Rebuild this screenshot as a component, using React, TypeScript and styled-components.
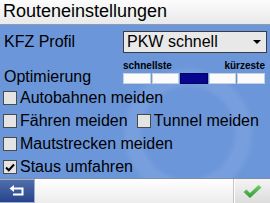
import styled, { createGlobalStyle } from "styled-components"

const GlobalStyle = createGlobalStyle`
    html, body {
        margin: 0;
        padding: 0;
        background: #ffffff;
    }
    body {
        font-family: "Liberation Sans", Arial, sans-serif;
    }
`

const Screen = styled.div`
    width: 270px;
    height: 203px;
    display: flex;
    flex-direction: column;
    overflow: hidden;
    box-sizing: border-box;
`

const TitleBar = styled.div`
    height: 25px;
    box-sizing: border-box;
    display: flex;
    align-items: center;
    padding: 0 0 1px 3px;
    background: linear-gradient(#fcfcfc, #e9e9e9);
    border-bottom: 1px solid #8e9bb3;
    font-size: 18px;
    color: #000;
`

const Body = styled.div`
    flex: 1;
    display: flex;
    flex-direction: column;
    padding: 6px 3px 0 3px;
    background-color: #6b96da;
    background-image: radial-gradient(
        circle at 188px 108px,
        transparent 44px,
        rgba(255, 255, 255, 0.09) 50px,
        rgba(255, 255, 255, 0.09) 60px,
        transparent 67px
    );
`

const FieldRow = styled.div<{ $gap?: number }>`
    display: grid;
    grid-template-columns: 120px 144px;
    align-items: center;
    margin-top: ${(p) => p.$gap ?? 0}px;
`

const Label = styled.div<{ $drop?: number }>`
    font-size: 16px;
    color: #000;
    padding-left: 1px;
    padding-top: ${(p) => p.$drop ?? 0}px;
`

const Select = styled.div`
    height: 22px;
    box-sizing: border-box;
    display: flex;
    align-items: center;
    justify-content: space-between;
    padding: 0 5px 0 3px;
    background: #e8e8e8;
    border: 1px solid #3c3c3c;
    font-size: 16px;
    color: #000;
`

const Arrow = styled.span`
    width: 0;
    height: 0;
    border-left: 4px solid transparent;
    border-right: 4px solid transparent;
    border-top: 4px solid #000;
`

const Slider = styled.div`
    display: flex;
    flex-direction: column;
`

const SliderLabels = styled.div`
    display: flex;
    justify-content: space-between;
    font-size: 10px;
    font-weight: bold;
    color: #000;
    line-height: 10px;
    padding-right: 2px;
`

const Segments = styled.div`
    display: grid;
    grid-template-columns: repeat(5, 1fr);
    gap: 1px;
    width: 142px;
    margin-top: 2px;
`

const Segment = styled.div<{ $active: boolean }>`
    height: 11px;
    box-sizing: border-box;
    background: ${(p) => (p.$active ? "#06068e" : "#fbfbfb")};
    border: 1px solid ${(p) => (p.$active ? "#020260" : "#c8d0dc")};
`

const CheckList = styled.div`
    display: flex;
    flex-direction: column;
    gap: 9px;
    margin-top: 5px;
`

const CheckLine = styled.div`
    display: flex;
    align-items: center;
    gap: 9px;
`

const Check = styled.label`
    display: flex;
    align-items: center;
    gap: 3px;
    font-size: 16px;
    color: #000;
    height: 14px;
    white-space: nowrap;
`

const Box = styled.span`
    width: 14px;
    height: 14px;
    box-sizing: border-box;
    display: flex;
    align-items: center;
    justify-content: center;
    background: #e4e4e4;
    border: 1px solid #4a4a4a;
`

const Footer = styled.div`
    height: 25px;
    box-sizing: border-box;
    display: flex;
    border-top: 1px solid #7f8ea8;
    background: linear-gradient(#ffffff, #e6e6e6);
`

const BackButton = styled.div`
    width: 35px;
    display: flex;
    align-items: center;
    justify-content: center;
    background: linear-gradient(#4f6eab, #27448a);
    border: 1px solid #9fb0cf;
    border-left: none;
    box-sizing: border-box;
`

const Spacer = styled.div`
    flex: 1;
    border-right: 1px solid #c4c4c4;
    background: linear-gradient(#ffffff, #ececec);
`

const OkButton = styled.div`
    width: 35px;
    display: flex;
    align-items: center;
    justify-content: center;
    background: linear-gradient(#f4f4f4, #dcdcdc);
    border-left: 1px solid #ffffff;
`

const BackIcon = () => (
    <svg width="17" height="12" viewBox="0 0 17 12">
        <path d="M4 3.5 H13.5 V9.5 H4" fill="none" stroke="#fff" strokeWidth="2" />
        <path d="M0.5 3.5 L5 0 V7 Z" fill="#fff" />
    </svg>
)

const OkIcon = () => (
    <svg width="19" height="13" viewBox="0 0 19 13">
        <defs>
            <linearGradient id="ok" x1="0" y1="0" x2="0" y2="1">
                <stop offset="0" stopColor="#6fd065" />
                <stop offset="1" stopColor="#2f9a35" />
            </linearGradient>
        </defs>
        <path d="M0.5 7 L3.5 4.5 L7 8 L15.5 0 L18.5 2.5 L7 13 Z" fill="url(#ok)" />
    </svg>
)

const Tick = () => (
    <svg width="10" height="9" viewBox="0 0 10 9">
        <path d="M1 4.5 L3.8 7.2 L9 1.5" fill="none" stroke="#000" strokeWidth="2" />
    </svg>
)

const CheckItem = ({ label, checked }: { label: string; checked?: boolean }) => (
    <Check>
        <Box>{checked && <Tick />}</Box>
        {label}
    </Check>
)

export default function App() {
    const steps = [0, 1, 2, 3, 4]
    const selected = 2

    return (
        <Screen>
            <GlobalStyle />
            <TitleBar>Routeneinstellungen</TitleBar>

            <Body>
                <FieldRow>
                    <Label>KFZ Profil</Label>
                    <Select>
                        PKW schnell
                        <Arrow />
                    </Select>
                </FieldRow>

                <FieldRow $gap={5}>
                    <Label $drop={10}>Optimierung</Label>
                    <Slider>
                        <SliderLabels>
                            <span>schnellste</span>
                            <span>kürzeste</span>
                        </SliderLabels>
                        <Segments>
                            {steps.map((s) => (
                                <Segment key={s} $active={s === selected} />
                            ))}
                        </Segments>
                    </Slider>
                </FieldRow>

                <CheckList>
                    <CheckItem label="Autobahnen meiden" />
                    <CheckLine>
                        <CheckItem label="Fähren meiden" />
                        <CheckItem label="Tunnel meiden" />
                    </CheckLine>
                    <CheckItem label="Mautstrecken meiden" />
                    <CheckItem label="Staus umfahren" checked />
                </CheckList>
            </Body>

            <Footer>
                <BackButton>
                    <BackIcon />
                </BackButton>
                <Spacer />
                <OkButton>
                    <OkIcon />
                </OkButton>
            </Footer>
        </Screen>
    )
}
